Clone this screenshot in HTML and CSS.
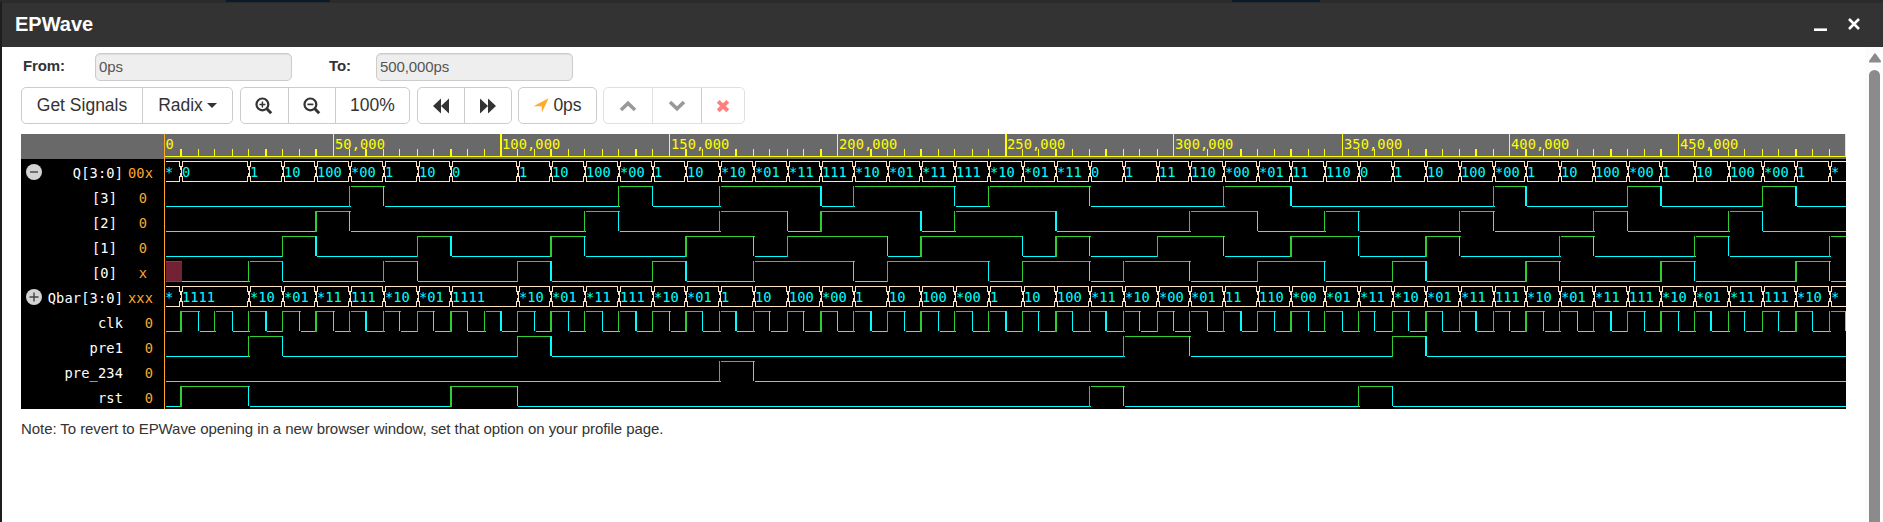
FILE: index.html
```html
<!DOCTYPE html>
<html lang="en">
<head>
<meta charset="utf-8">
<title>EPWave</title>
<link rel="stylesheet" href="styles.css">
</head>
<body>
<div class="backdrop"><i class="seg seg-a"></i><i class="seg seg-b"></i></div>
<div class="modal">
  <header class="titlebar">
    <h1 class="title">EPWave</h1>
    <div class="window-actions">
      <svg width="13" height="14" viewBox="0 0 13 14"><path d="M0 12.7h13" stroke="#fff" stroke-width="2.6"/></svg>
      <svg width="12" height="14" viewBox="0 0 12 14"><path d="M1 2l10 10M11 2L1 12" stroke="#fff" stroke-width="2.6"/></svg>
    </div>
  </header>
  <div class="content">
    <main class="main">
      <div class="range">
        <label class="from">From:</label><div class="field">0ps</div>
        <label class="to">To:</label><div class="field">500,000ps</div>
      </div>
      <div class="toolbar">
        <div class="group g1"><button class="btn">Get Signals</button><button class="btn">Radix<i class="caret"></i></button></div>
        <div class="group g2">
          <button class="btn"><svg width="18" height="18" viewBox="0 0 18 18" fill="none" stroke="#333"><circle cx="7.4" cy="7.4" r="5.9" stroke-width="2.2"/><path d="M4.4 7.4h6M7.4 4.4v6" stroke-width="1.5"/><path d="M11.8 11.8l4.4 4.4" stroke-width="3"/></svg></button>
          <button class="btn"><svg width="18" height="18" viewBox="0 0 18 18" fill="none" stroke="#333"><circle cx="7.4" cy="7.4" r="5.9" stroke-width="2.2"/><path d="M4.4 7.4h6" stroke-width="1.7"/><path d="M11.8 11.8l4.4 4.4" stroke-width="3"/></svg></button>
          <button class="btn">100%</button>
        </div>
        <div class="group g3">
          <button class="btn"><svg width="18" height="16" viewBox="0 0 18 16" fill="#333"><path d="M9 .5v15L1 8zM17 .5v15L9 8z"/></svg></button>
          <button class="btn"><svg width="18" height="16" viewBox="0 0 18 16" fill="#333"><path d="M1 .5v15L9 8zM9 .5v15L17 8z"/></svg></button>
        </div>
        <div class="group g4"><button class="btn"><svg class="arrow" width="16" height="15" viewBox="0 0 16 15"><path d="M15.6.2L8.8 14.8V8.3H.4z" fill="#ffab2e"/></svg>0ps</button></div>
        <div class="group g5">
          <button class="btn"><svg width="18" height="12" viewBox="0 0 18 12" fill="none" stroke="#999" stroke-width="3.6"><path d="M2 10l7-6.8 7 6.8"/></svg></button>
          <button class="btn"><svg width="18" height="12" viewBox="0 0 18 12" fill="none" stroke="#999" stroke-width="3.6"><path d="M2 2l7 6.8L16 2"/></svg></button>
          <button class="btn"><svg width="14" height="14" viewBox="0 0 14 14" fill="none" stroke="#ff7f7f" stroke-width="4"><path d="M2.2 2.4l9.6 9.4M11.8 2.4l-9.6 9.4"/></svg></button>
        </div>
      </div>
      <div class="viewer">
        <div class="signals">
          <div class="signals-head"></div>
          <div class="signal"><svg class="toggle" width="16" height="16" viewBox="0 0 16 16"><circle cx="8" cy="8" r="8" fill="#d3d3d3"/><path d="M4 8h8" stroke="#444" stroke-width="1.4"/></svg><span class="name">Q[3:0]</span><span class="value">00x</span></div>
          <div class="signal bit"><span class="name">[3]</span><span class="value">0</span></div>
          <div class="signal bit"><span class="name">[2]</span><span class="value">0</span></div>
          <div class="signal bit"><span class="name">[1]</span><span class="value">0</span></div>
          <div class="signal bit"><span class="name">[0]</span><span class="value">x</span></div>
          <div class="signal"><svg class="toggle" width="16" height="16" viewBox="0 0 16 16"><circle cx="8" cy="8" r="8" fill="#d3d3d3"/><path d="M3.5 8h9M8 3.5v9" stroke="#444" stroke-width="1.4"/></svg><span class="name">Qbar[3:0]</span><span class="value">xxx</span></div>
          <div class="signal"><span class="name">clk</span><span class="value">0</span></div>
          <div class="signal"><span class="name">pre1</span><span class="value">0</span></div>
          <div class="signal"><span class="name">pre_234</span><span class="value">0</span></div>
          <div class="signal"><span class="name">rst</span><span class="value">0</span></div>
        </div>
        <svg class="plot" id="plot" width="1682" height="275" viewBox="164 134 1682 275"></svg>
      </div>
      <p class="note">Note: To revert to EPWave opening in a new browser window, set that option on your profile page.</p>
    </main>
    <aside class="scrollbar">
      <svg width="12" height="10" viewBox="0 0 12 10"><path d="M6 1.2L11 8.4H1z" fill="#8b8b8b" stroke="#8b8b8b" stroke-width="2" stroke-linejoin="round"/></svg>
      <div class="thumb"></div>
    </aside>
  </div>
</div>
<script src="waves.js"></script>
</body>
</html>
```

FILE: styles.css
```css
* { box-sizing: border-box; }
body {
  margin: 0;
  height: 522px;
  overflow: hidden;
  background: #1d1d20;
  color: #333;
  font-family: "Liberation Sans", Arial, sans-serif;
  font-size: 15px;
}
.backdrop { height: 2px; background: #2b2b2b; display: flex; }
.seg { height: 2px; background: #0a1a2b; }
.seg-a { width: 104px; margin-left: 226px; }
.seg-b { width: 88px; margin-left: 902px; }
.modal { margin-left: 2px; height: 520px; background: #fff; display: flex; flex-direction: column; }
.titlebar { height: 45px; flex: none; background: #333; display: flex; justify-content: space-between; padding: 0 23px 0 13px; border-top: 1px solid #2b2b2b; }
.title { margin: 0; color: #fff; font-size: 20px; line-height: 42px; font-weight: bold; }
.window-actions { display: flex; gap: 21px; padding-top: 14px; }
.content { flex: 1; display: flex; min-height: 0; }
.main { flex: 1; padding: 6px 0 0 19px; }
.range { display: flex; height: 28px; }
.range label { font-weight: bold; line-height: 26px; padding-left: 2px; letter-spacing: -0.1px; }
.from { width: 74px; }
.to { width: 48px; margin-left: 36px; }
.range .to { padding-left: 1px; }
.field { width: 197px; height: 28px; border: 1px solid #ccc; border-radius: 5px; background: #eee; box-shadow: inset 0 1px 1px rgba(0,0,0,.075); color: #555; line-height: 25px; padding-left: 3px; letter-spacing: -0.1px; }
.toolbar { display: flex; margin-top: 6px; height: 37px; }
.group { display: flex; border: 1px solid #ccc; border-radius: 5px; height: 37px; }
.btn { border: 0; border-left: 1px solid #ccc; background: none; padding: 0; margin: 0; display: flex; align-items: center; justify-content: center; font: 17.5px "Liberation Sans", Arial, sans-serif; color: #333; flex: 1; }
.btn:first-child { border-left: 0; }
.g1 { width: 212px; margin-right: 7px; }
.g1 .btn:first-child { flex: none; width: 120px; }
.caret { border: 5.5px solid transparent; border-top-color: #333; border-bottom: 0; margin-left: 4px; }
.g2 { width: 170px; margin-right: 7px; }
.g2 .btn { flex: none; width: 47px; padding-right: 1px; }
.g2 .btn:last-child { flex: 1; padding-right: 0; }
.g3 { width: 95px; margin-right: 6px; }
.g4 { width: 79px; margin-right: 6px; }
.arrow { margin-right: 4px; }
.g5 { width: 142px; border-color: #e0e0e0; }
.g5 .btn { flex: none; width: 48px; border-color: #e0e0e0; }
.g5 .btn:nth-child(2) { width: 49px; }
.g5 .btn:last-child { flex: 1; border-color: #ccc; }
.viewer { display: flex; margin-top: 10px; width: 1825px; height: 275px; background: #000; }
.signals, .plot { font-family: "DejaVu Sans Mono", monospace; font-size: 13.7px; }
.signals { width: 143px; letter-spacing: 0.12px; }
.signals-head { height: 25px; background: #696969; }
.signal { display: flex; position: relative; height: 25px; line-height: 28px; color: #fff; padding-right: 11px; white-space: pre; }
.name { flex: 1; text-align: right; }
.value { width: 30px; text-align: right; color: #ffa82e; }
.bit { padding-right: 17px; }
.toggle { position: absolute; left: 5px; top: 5px; }
.plot { display: block; }
.ruler-text { fill: #ff0; letter-spacing: 0.1px; }
.bus-text { fill: #0ff; }
.note { margin: 0; padding-top: 11px; line-height: 18px; letter-spacing: -0.066px; }
.scrollbar { width: 18px; background: #fcfcfc; display: flex; flex-direction: column; align-items: center; padding: 6px 0 0 1px; }
.thumb { width: 11px; flex: 1; margin-top: 7px; background: #8b8b8b; border-radius: 6px 6px 0 0; }
```

FILE: waves.js
```js
const plot = document.getElementById("plot");
const GREEN = "#32cd32", CYAN = "#00ffff", BUS = "#ffe4c4", YELLOW = "#ffff00";
const RIGHT = 1846, START = 166, FIRST_ROW = 161, ROW = 25, H = 20;

function add(tag, attrs, text) {
  const el = document.createElementNS("http://www.w3.org/2000/svg", tag);
  for (const k in attrs) el.setAttribute(k, attrs[k]);
  if (text !== undefined) el.textContent = text;
  plot.appendChild(el);
}
function rect(x, y, w, h, fill) {
  if (w > 0) add("rect", { x, y, width: w, height: h, fill });
}

// Pixel column and thickness of the vertical line at time t (ns)
function column(t) {
  const n = Math.floor(131.5 + 2.69 * t + 1e-6);
  const left = Math.ceil(n * 1.25);
  return { left, width: Math.ceil((n + 1) * 1.25) - left };
}
// First pixel of the level that follows an edge at t
function after(t) {
  const c = column(t).left;
  return c % 5 === 2 ? c + 1 : c + 2;
}

function ruler() {
  rect(164, 134, 1682, 25, "#696969");
  rect(164, 156, 1682, 1, YELLOW);
  for (let t = 5; t <= 500; t += 5) {
    const c = column(t), major = t % 50 === 0;
    rect(c.left, major ? 134 : 149, c.width, major ? 22 : 7, YELLOW);
  }
  for (let t = 0; t < 500; t += 50) {
    const x = t ? column(t).left + 2 : 165.5;
    add("text", { x, y: 149, class: "ruler-text" }, t ? t + ",000" : "0");
  }
}

function wave(row, highs, from = 0) {
  const top = FIRST_ROW + ROW * row;
  let x = from ? after(from) : START;
  for (const [a, b] of highs) {
    const up = column(a), down = column(b);
    rect(x, top + H, after(a) - x, 1, CYAN);
    rect(up.left, top, up.width, H + 1, GREEN);
    const end = b < 500 ? after(b) : RIGHT;
    rect(after(a), top, end - after(a), 1, GREEN);
    if (b < 500 || row === 6) rect(down.left, top, down.width, H, CYAN);
    x = end;
  }
  rect(x, top + H, RIGHT - x, 1, CYAN);
}

function bus(row, list) {
  const top = FIRST_ROW + ROW * row;
  list.forEach(([t, label], i) => {
    const x0 = t ? column(t).left + 2 : START;
    const last = i === list.length - 1;
    const x1 = last ? RIGHT : column(list[i + 1][0]).left;
    rect(x0, top, x1 - x0, 1, BUS);
    rect(x0, top + H, x1 - x0, 1, BUS);
    if (t) {
      rect(x0, top, 1, 6, BUS);
      rect(x0 - 1, top + 5, 1, 11, BUS);
      rect(x0, top + 15, 1, 6, BUS);
    }
    if (!last) {
      rect(x1 - 1, top, 1, 6, BUS);
      rect(x1, top + 5, 1, 4, BUS);
      rect(x1, top + 12, 1, 4, BUS);
      rect(x1 - 1, top + 15, 1, 6, BUS);
    }
    add("text", { x: t ? x0 : 165, y: top + 16, class: "bus-text" }, label);
  });
}

// "-" holds the previous value for another 10 ns
function parse(values) {
  const list = [[0, "*"]];
  values.split(" ").forEach((v, i) => { if (v !== "-") list.push([5 + 10 * i, v]); });
  return list;
}

ruler();
bus(0, parse("0 - 1 10 100 *00 1 10 0 - 1 10 100 *00 1 10 *10 *01 *11 111 *10 *01 *11 111 *10 *01 *11 0 1 11 110 *00 *01 11 110 0 1 10 100 *00 1 10 100 *00 1 10 100 *00 1 *"));
wave(1, [[55,65],[135,145],[165,195],[205,235],[245,275],[315,335],[395,405],[435,445],[475,485]]);
wave(2, [[45,55],[125,135],[165,185],[195,225],[235,265],[305,325],[345,355],[385,395],[425,435],[465,475]]);
wave(3, [[35,45],[75,85],[115,125],[155,175],[185,215],[225,255],[265,275],[295,315],[335,355],[375,385],[415,425],[455,465],[495,500]]);
rect(START, 261, 16, 21, "#732233");
rect(START, 261, 16, 1, "#dc143c");
rect(START, 281, 16, 1, "#dc143c");
wave(4, [[25,35],[65,75],[105,115],[145,155],[175,205],[215,245],[255,275],[285,305],[325,345],[365,375],[405,415],[445,455],[485,495]], 5);
bus(5, parse("1111 - *10 *01 *11 111 *10 *01 1111 - *10 *01 *11 111 *10 *01 1 10 100 *00 1 10 100 *00 1 10 100 *11 *10 *00 *01 11 110 *00 *01 *11 *10 *01 *11 111 *10 *01 *11 111 *10 *01 *11 111 *10 *"));
wave(6, Array.from({ length: 50 }, (_, i) => [5 + 10 * i, 10 + 10 * i]));
wave(7, [[25,35],[105,115],[285,305],[365,375]]);
wave(8, [[165,175]]);
wave(9, [[5,25],[85,105],[275,285],[355,365]]);
rect(164, 134, 1, 275, "#ffa82e");
```
